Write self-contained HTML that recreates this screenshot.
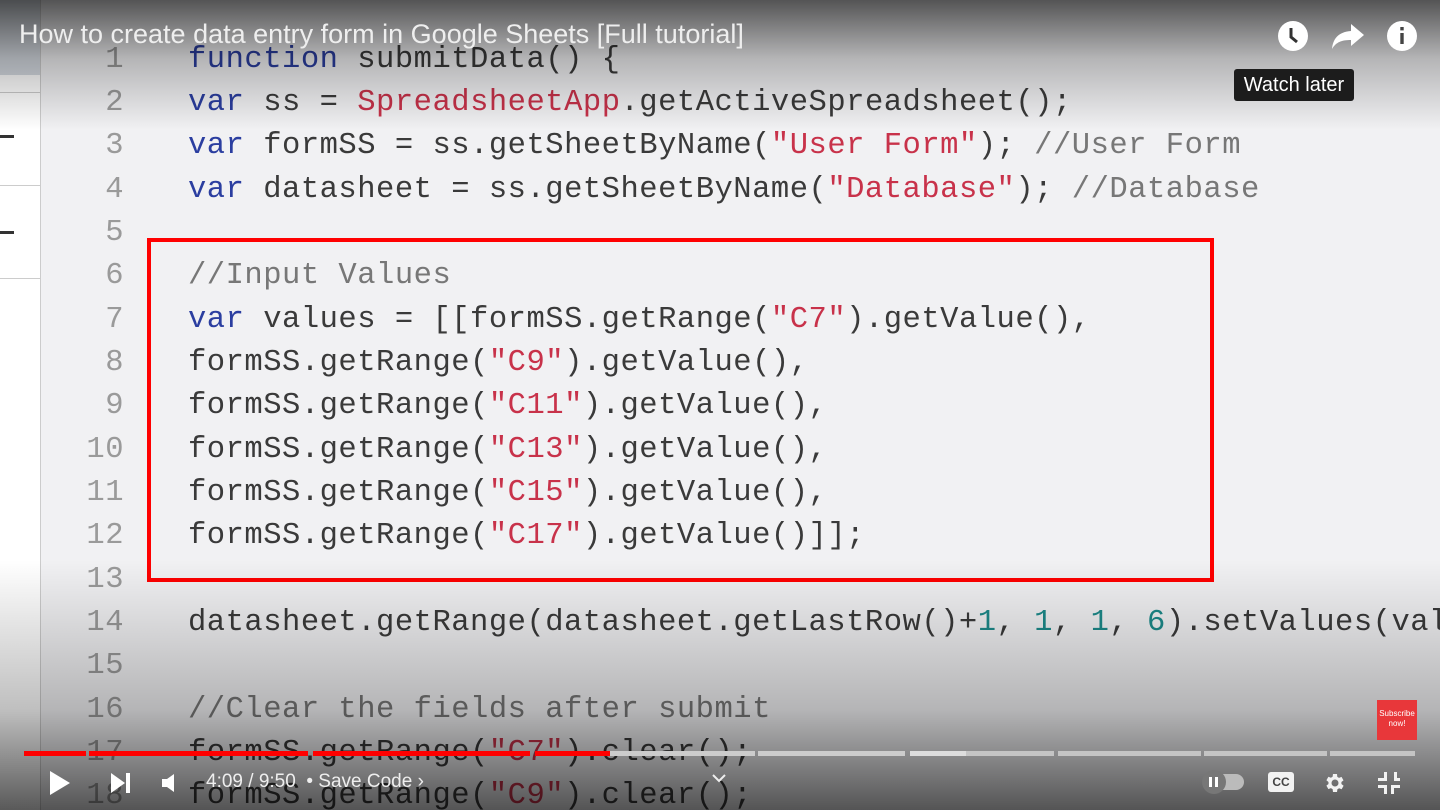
<!DOCTYPE html>
<html><head><meta charset="utf-8"><style>
html,body{margin:0;padding:0}
body{width:1440px;height:810px;position:relative;overflow:hidden;background:#f1f1f3;font-family:"Liberation Sans",sans-serif}
.left{position:absolute;left:0;top:0;width:40px;height:810px;background:#fff;border-right:1px solid #ccc}
.left .top{position:absolute;left:0;top:0;width:40px;height:75px;background:#d6dbe2}
.left .ln{position:absolute;left:0;width:40px;height:1px;background:#ccc}
.left .d{position:absolute;left:0;width:14px;height:3px;background:#333}
.code{position:absolute;left:0;top:0;width:1440px;height:810px;overflow:hidden;font-family:"Liberation Mono",monospace;font-size:30.5px;letter-spacing:0.5px;color:#3a3a3a}
.l{position:absolute;left:188px;white-space:pre;line-height:43px;height:43px}
.n{position:absolute;width:124px;text-align:right;left:0;color:#9a9a9a;white-space:pre;line-height:43px}
.k{color:#2b3ea0}.s{color:#c8324a}.c{color:#777}.num{color:#1c8a8a}
.box{position:absolute;left:147px;top:238px;width:1059px;height:336px;border:4px solid #f00}
.topg{position:absolute;left:0;top:0;width:1440px;height:130px;background:linear-gradient(rgba(0,0,0,.65),rgba(0,0,0,.25) 45%,rgba(0,0,0,0))}
.botg{position:absolute;left:0;top:560px;width:1440px;height:250px;background:linear-gradient(rgba(0,0,0,0),rgba(0,0,0,.25) 60%,rgba(0,0,0,.65))}
.title{position:absolute;left:19px;top:19px;color:#eee;font-size:27px}
.tip{position:absolute;left:1234px;top:69px;width:120px;height:32px;background:#1c1c1c;border-radius:3px;color:#fff;font-size:20px;line-height:32px;text-align:center}
.seg{position:absolute;top:751px;height:5px}
.ctl{position:absolute;color:#eee;font-size:19px;top:771px}
</style></head><body>
<div class="left"><div class="top"></div><div class="ln" style="top:92px"></div><div class="ln" style="top:185px"></div><div class="ln" style="top:278px"></div><div class="d" style="top:135px"></div><div class="d" style="top:231px"></div></div>
<div class="code">
<div class="n" style="top:39px">1</div><div class="l" style="top:39px"><span class="k">function</span> submitData() {</div>
<div class="n" style="top:82px">2</div><div class="l" style="top:82px"><span class="k">var</span> ss = <span class="s">SpreadsheetApp</span>.getActiveSpreadsheet();</div>
<div class="n" style="top:125px">3</div><div class="l" style="top:125px"><span class="k">var</span> formSS = ss.getSheetByName(<span class="s">"User Form"</span>); <span class="c">//User Form</span></div>
<div class="n" style="top:169px">4</div><div class="l" style="top:169px"><span class="k">var</span> datasheet = ss.getSheetByName(<span class="s">"Database"</span>); <span class="c">//Database</span></div>
<div class="n" style="top:212px">5</div>
<div class="n" style="top:255px">6</div><div class="l" style="top:255px"><span class="c">//Input Values</span></div>
<div class="n" style="top:299px">7</div><div class="l" style="top:299px"><span class="k">var</span> values = [[formSS.getRange(<span class="s">"C7"</span>).getValue(),</div>
<div class="n" style="top:342px">8</div><div class="l" style="top:342px">formSS.getRange(<span class="s">"C9"</span>).getValue(),</div>
<div class="n" style="top:385px">9</div><div class="l" style="top:385px">formSS.getRange(<span class="s">"C11"</span>).getValue(),</div>
<div class="n" style="top:429px">10</div><div class="l" style="top:429px">formSS.getRange(<span class="s">"C13"</span>).getValue(),</div>
<div class="n" style="top:472px">11</div><div class="l" style="top:472px">formSS.getRange(<span class="s">"C15"</span>).getValue(),</div>
<div class="n" style="top:515px">12</div><div class="l" style="top:515px">formSS.getRange(<span class="s">"C17"</span>).getValue()]];</div>
<div class="n" style="top:559px">13</div>
<div class="n" style="top:602px">14</div><div class="l" style="top:602px">datasheet.getRange(datasheet.getLastRow()+<span class="num">1</span>, <span class="num">1</span>, <span class="num">1</span>, <span class="num">6</span>).setValues(val</div>
<div class="n" style="top:645px">15</div>
<div class="n" style="top:689px">16</div><div class="l" style="top:689px"><span class="c">//Clear the fields after submit</span></div>
<div class="n" style="top:732px">17</div><div class="l" style="top:732px">formSS.getRange(<span class="s">"C7"</span>).clear();</div>
<div class="n" style="top:775px">18</div><div class="l" style="top:775px">formSS.getRange(<span class="s">"C9"</span>).clear();</div>
</div>
<div class="box"></div>
<div class="topg"></div><div class="botg"></div>
<div class="title">How to create data entry form in Google Sheets [Full tutorial]</div>
<svg style="position:absolute;left:1277px;top:20px" width="32" height="32" viewBox="0 0 32 32"><circle cx="16" cy="16" r="15" fill="#fff"/><path d="M14 8v9l6 5" stroke="#333" stroke-width="3" fill="none"/></svg>
<svg style="position:absolute;left:1331px;top:22px" width="34" height="28" viewBox="0 0 34 28"><path d="M20 2l13 11-13 11v-6c-9 0-15 2-19 9 1-10 6-17 19-18z" fill="#fff"/></svg>
<svg style="position:absolute;left:1386px;top:20px" width="32" height="32" viewBox="0 0 32 32"><circle cx="16" cy="16" r="15" fill="#fff"/><rect x="14.3" y="13" width="3.4" height="11" fill="#444"/><rect x="14.3" y="7" width="3.4" height="3.4" fill="#444"/></svg>
<div class="tip">Watch later</div>
<div style="position:absolute;left:1377px;top:700px;width:40px;height:40px;background:#e8373a;color:#fff;font-size:8px;text-align:center;line-height:10px;padding-top:9px;box-sizing:border-box">Subscribe<br>now!</div>
<div class="seg" style="left:610px;width:145px;background:#ccc"></div>
<div class="seg" style="left:758px;width:147px;background:#ccc"></div>
<div class="seg" style="left:910px;width:56px;background:#ddd"></div>
<div class="seg" style="left:966px;width:88px;background:#c4c4c4"></div>
<div class="seg" style="left:1058px;width:143px;background:#c4c4c4"></div>
<div class="seg" style="left:1204px;width:123px;background:#c4c4c4"></div>
<div class="seg" style="left:1330px;width:85px;background:#c4c4c4"></div>
<div class="seg" style="left:24px;width:62px;background:#f00"></div>
<div class="seg" style="left:89px;width:219px;background:#f00"></div>
<div class="seg" style="left:313px;width:217px;background:#f00"></div>
<div class="seg" style="left:535px;width:75px;background:#f00"></div>
<svg style="position:absolute;left:48px;top:770px" width="24" height="26"><path d="M2 1l20 12-20 12z" fill="#fff"/></svg>
<svg style="position:absolute;left:110px;top:772px" width="22" height="22"><path d="M1 1l14 10-14 10z" fill="#fff"/><rect x="16" y="1" width="4" height="20" fill="#fff"/></svg>
<svg style="position:absolute;left:161px;top:773px" width="20" height="20"><path d="M1 6h5l7-5v18l-7-5h-5z" fill="#fff"/></svg>
<div class="ctl" style="left:206px">4:09 / 9:50 &nbsp;• Save Code ›</div>
<svg style="position:absolute;left:712px;top:774px" width="14" height="10"><path d="M1 1l6 6 6-6" stroke="#eee" stroke-width="2" fill="none"/></svg>
<div style="position:absolute;left:1204px;top:774px;width:40px;height:16px;border-radius:8px;background:#bbb"></div>
<div style="position:absolute;left:1202px;top:770px;width:24px;height:24px;border-radius:12px;background:#777"></div>
<div style="position:absolute;left:1209px;top:777px;width:3px;height:10px;background:#fff;box-shadow:6px 0 #fff"></div>
<div style="position:absolute;left:1268px;top:772px;width:26px;height:20px;border-radius:3px;background:#f2f2f2;color:#444;font-weight:bold;font-size:12px;line-height:20px;text-align:center">CC</div>
<svg style="position:absolute;left:1323px;top:771px" width="24" height="24" viewBox="0 0 24 24"><path d="M19.4 13a7.5 7.5 0 000-2l2.1-1.6-2-3.5-2.5 1a7 7 0 00-1.7-1L15 3h-4l-.4 2.7a7 7 0 00-1.700 1l-2.5-1-2 3.5L6.5 11a7.5 7.5 0 000 2l-2.1 1.6 2 3.5 2.5-1a7 7 0 001.7 1L11 21h4l.4-2.7a7 7 0 001.7-1l2.5 1 2-3.5zM13 15.5A3.5 3.5 0 1113 8.5a3.5 3.5 0 010 7z" fill="#f2f2f2" transform="translate(-1 0)"/></svg>
<svg style="position:absolute;left:1377px;top:771px" width="24" height="24" viewBox="0 0 24 24"><path d="M7 1v6H1v3h9V1zM17 1v9h6V7h-3V1zM1 14v3h6v6h3v-9zM14 14v9h3v-6h6v-3z" fill="#f2f2f2"/></svg>
</body></html>
